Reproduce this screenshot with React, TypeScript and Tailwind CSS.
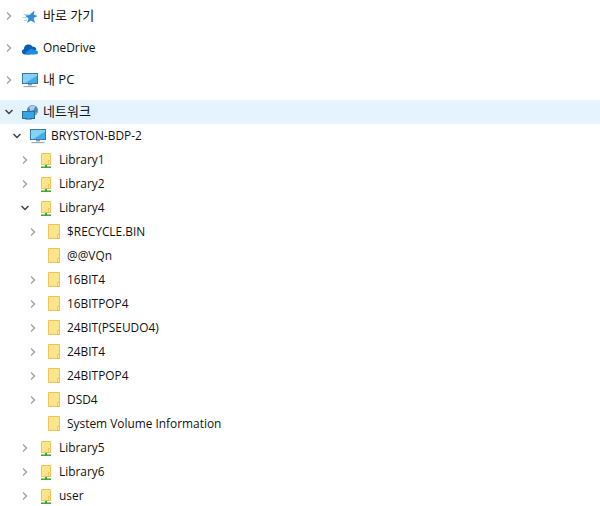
type IconKind = 'star' | 'cloud' | 'pc' | 'network' | 'share' | 'folder';

type Node = {
  label: string;
  level: number;
  icon: IconKind;
  state?: 'open' | 'closed';
  selected?: boolean;
  gap?: boolean;
  hangul?: boolean;
};

const nodes: Node[] = [
  { label: '바로 가기', level: 0, icon: 'star', state: 'closed', gap: true, hangul: true },
  { label: 'OneDrive', level: 0, icon: 'cloud', state: 'closed', gap: true },
  { label: '내 PC', level: 0, icon: 'pc', state: 'closed', gap: true, hangul: true },
  { label: '네트워크', level: 0, icon: 'network', state: 'open', selected: true, hangul: true },
  { label: 'BRYSTON-BDP-2', level: 1, icon: 'pc', state: 'open' },
  { label: 'Library1', level: 2, icon: 'share', state: 'closed' },
  { label: 'Library2', level: 2, icon: 'share', state: 'closed' },
  { label: 'Library4', level: 2, icon: 'share', state: 'open' },
  { label: '$RECYCLE.BIN', level: 3, icon: 'folder', state: 'closed' },
  { label: '@@VQn', level: 3, icon: 'folder' },
  { label: '16BIT4', level: 3, icon: 'folder', state: 'closed' },
  { label: '16BITPOP4', level: 3, icon: 'folder', state: 'closed' },
  { label: '24BIT(PSEUDO4)', level: 3, icon: 'folder', state: 'closed' },
  { label: '24BIT4', level: 3, icon: 'folder', state: 'closed' },
  { label: '24BITPOP4', level: 3, icon: 'folder', state: 'closed' },
  { label: 'DSD4', level: 3, icon: 'folder', state: 'closed' },
  { label: 'System Volume Information', level: 3, icon: 'folder' },
  { label: 'Library5', level: 2, icon: 'share', state: 'closed' },
  { label: 'Library6', level: 2, icon: 'share', state: 'closed' },
  { label: 'user', level: 2, icon: 'share', state: 'closed' },
];

const indents = ['pl-0', 'pl-2', 'pl-4', 'pl-6'];

function Chevron({ state }: { state?: 'open' | 'closed' }) {
  return (
    <svg width="18" height="16" viewBox="0 0 18 16" fill="none" className="shrink-0">
      {state === 'closed' && <path d="M7 4.500 10.500 8 7 11.500" stroke="#a6a6a6" strokeWidth="1.5" />}
      {state === 'open' && <path d="M5.500 6 9 9.500 12.500 6" stroke="#404040" strokeWidth="1.5" />}
    </svg>
  );
}

function TreeIcon({ kind }: { kind: IconKind }) {
  if (kind === 'star') {
    return (
      <svg width="16" height="16" viewBox="0 0 16 16">
        <path d="M1.500 6.500h5M0.500 9.500h4M2 12.500h3" stroke="#a9d6f2" strokeWidth="1" />
        <path d="M12.500 2.500 11.700 6.500 15.500 8 11.600 10 13 15 9 12.500 5 15 6.500 10.500 3 7.500 7.300 7z" fill="#2f8ed9" />
      </svg>
    );
  }
  if (kind === 'cloud') {
    return (
      <svg width="16" height="16" viewBox="0 0 16 16">
        <path d="M2.800 14.500A2.800 2.800 0 0 1 2 9a4.600 4.600 0 0 1 8.600-2.200 3.200 3.200 0 0 1 3.900 2.400L8 14.500z" fill="#0a5fb4" />
        <path d="M4.500 14.500C3.400 12.500 4.700 10.600 6.700 10.400 8 8.700 11 8.500 12.400 10 14.600 10 16 11.200 16 12.500 16 13.700 15 14.500 13.700 14.500z" fill="#1b8ce0" />
      </svg>
    );
  }
  if (kind === 'pc') {
    return (
      <svg width="16" height="16" viewBox="0 0 16 16">
        <rect x="0.500" y="1.500" width="15" height="10" fill="#43ace9" stroke="#3a7aa8" />
        <path d="M1 2h14v1.500L3.500 11H1z" fill="#86d2f7" />
        <path d="M6 12h4v1.500H6z" fill="#8aa0b0" />
        <path d="M1.500 14h13v1.200h-13z" fill="#a3adb4" />
      </svg>
    );
  }
  if (kind === 'network') {
    return (
      <svg width="16" height="16" viewBox="0 0 16 16">
        <circle cx="10.500" cy="6.500" r="5.500" fill="#4f86ba" />
        <path d="M7 3c2-2 5-2 6.500-.5L11.500 6 8.500 7z" fill="#a8cde8" />
        <path d="M11 10l3.500-2 .7 1.500L13 11.300z" fill="#8fb56f" />
        <rect x="0.500" y="7.500" width="12" height="7" fill="#35a5e8" stroke="#2a6f9f" />
        <path d="M5 14.500h3v1H5zM3 15.300h7v.7H3z" fill="#8aa0b0" />
      </svg>
    );
  }
  if (kind === 'share') {
    return (
      <svg width="16" height="16" viewBox="0 0 16 16">
        <path d="M3.500 1.500h9v11h-9z" fill="#fde590" stroke="#efc553" />
        <path d="M10.500 8.500h2v4h-2z" fill="#fde590" stroke="#efc553" />
        <path d="M7 13h2v2H7z" fill="#3fa535" />
        <path d="M3 14.500h10V16H3z" fill="#3fa535" />
      </svg>
    );
  }
  return (
    <svg width="16" height="16" viewBox="0 0 16 16">
      <path d="M2.500 0.500h11v14h-11z" fill="#fde590" stroke="#efc553" />
      <path d="M11.500 10.500h2v4h-2z" fill="#fde590" stroke="#efc553" />
    </svg>
  );
}

function TreeRow({ node }: { node: Node }) {
  return (
    <div
      className={`flex h-6 items-center ${indents[node.level]} ${node.selected ? 'bg-[#e5f3ff]' : ''} ${node.gap ? 'mb-2' : ''}`}
    >
      <Chevron state={node.state} />
      <span className="ml-[4px] flex shrink-0">
        <TreeIcon kind={node.icon} />
      </span>
      <span className={`ml-[5px] whitespace-nowrap pb-[2px] leading-[22px] text-[#111111] ${node.hangul ? 'text-[13px]' : 'text-[11.9px]'}`}>
        {node.label}
      </span>
    </div>
  );
}

export default function App() {
  return (
    <div className="h-[506px] w-[600px] overflow-hidden bg-white pt-1 font-['Open_Sans','Noto_Sans_CJK_KR',sans-serif]">
      {nodes.map((node) => (
        <TreeRow key={node.label} node={node} />
      ))}
    </div>
  );
}
